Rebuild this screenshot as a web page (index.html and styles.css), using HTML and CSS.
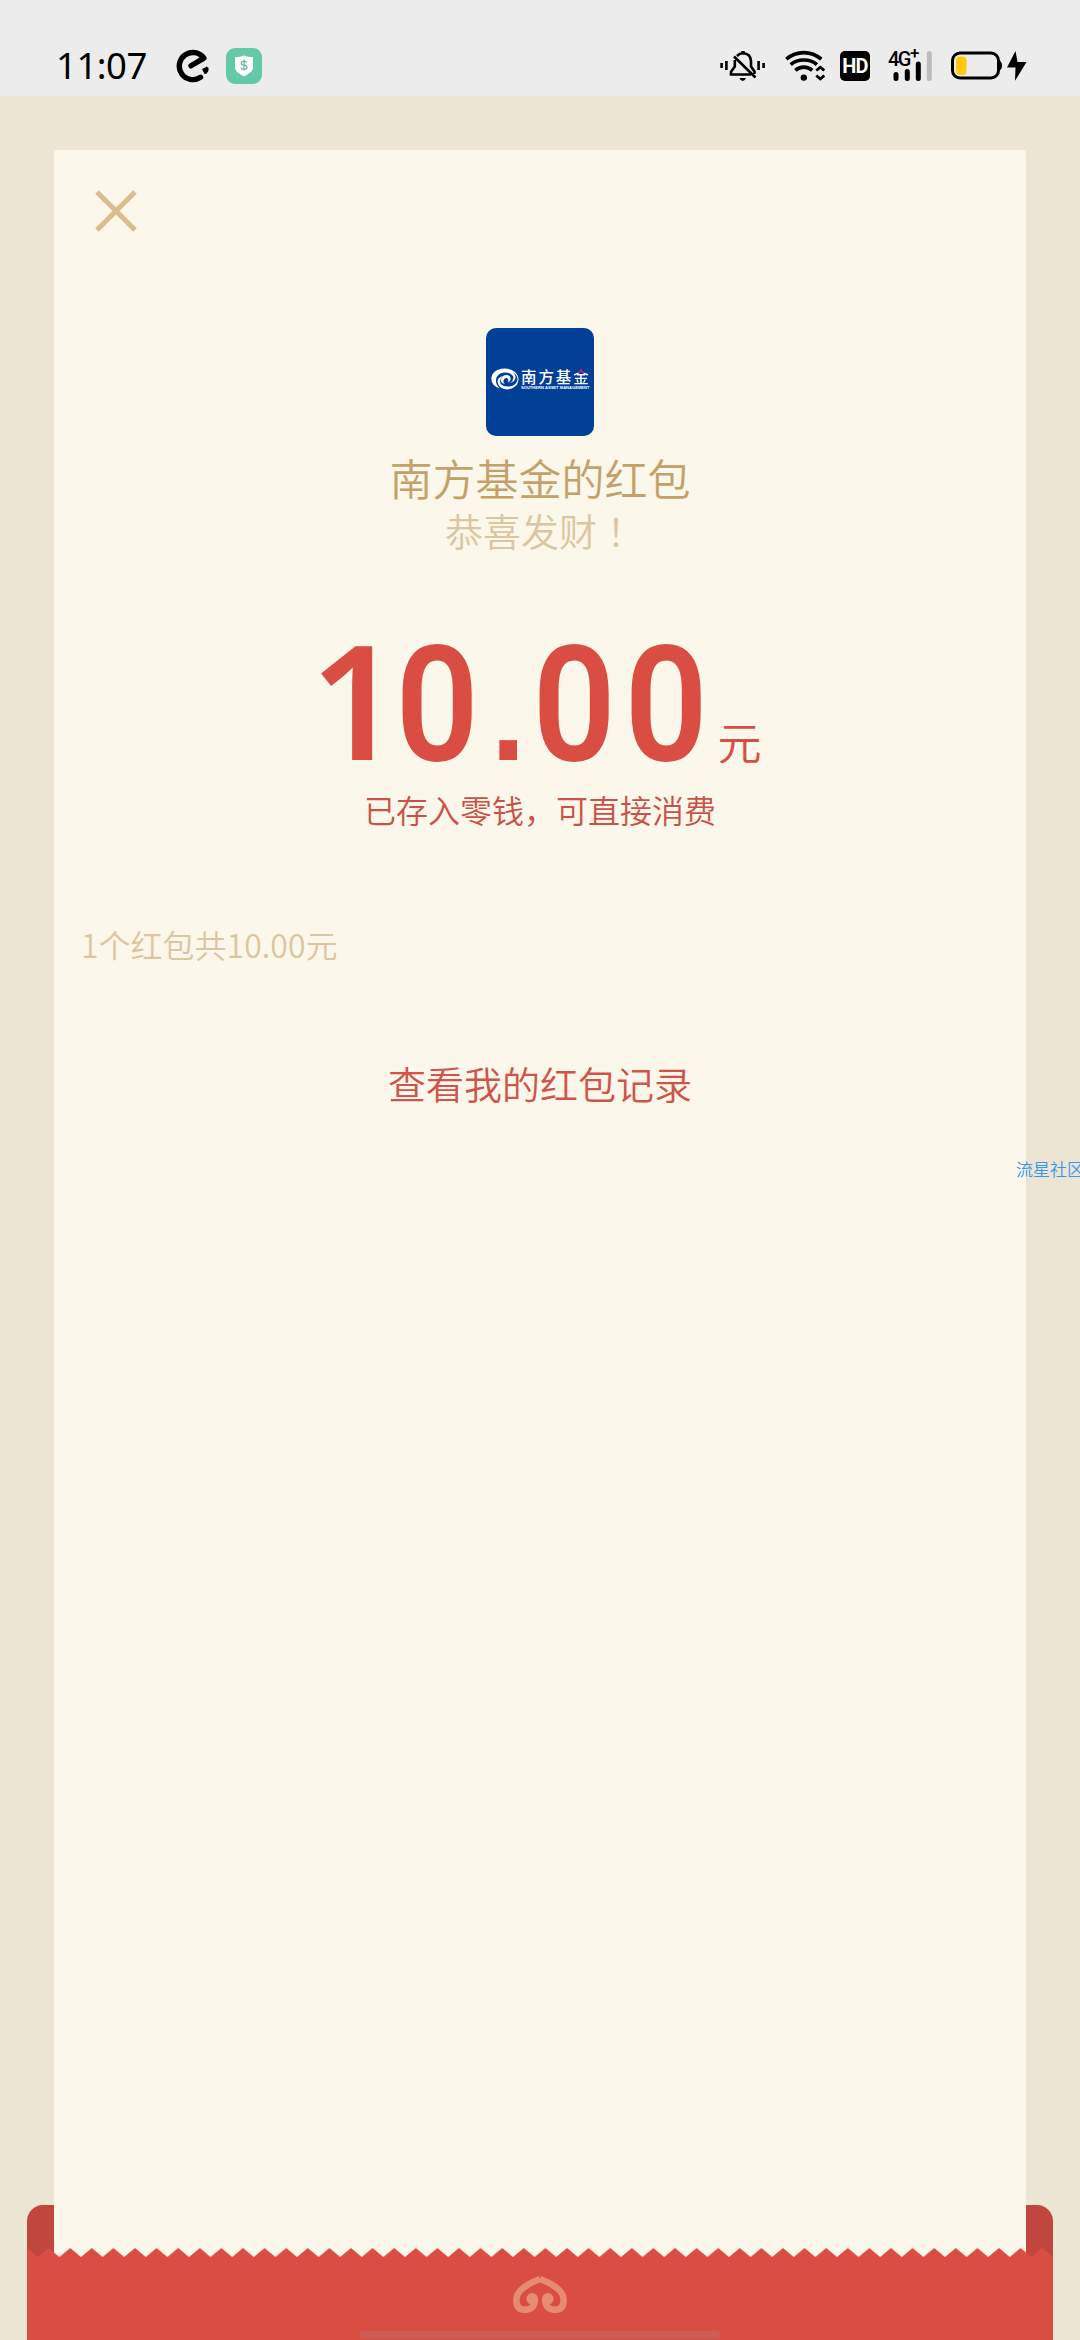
FILE: index.html
```html
<!DOCTYPE html>
<html lang="zh-CN">
<head>
<meta charset="utf-8">
<title>红包详情</title>
<link rel="stylesheet" href="styles.css">
</head>
<body>
<div class="screen">
  <header class="status">
    <div class="status-left">
      <time class="clock">11:07</time>
      <svg class="ico-e" width="34" height="34" viewBox="0 0 34 34">
        <path d="M24.500 28.300A13.600 13.600 0 1 1 27.900 9.100L15 16.800" fill="none" stroke="#000" stroke-width="5.400" stroke-linecap="round" stroke-linejoin="round"/>
        <path d="M26 20l2.500-1 2 -1.500 2 1.300v3l-2 3-2 .2z"/>
      </svg>
      <svg class="ico-shield" width="36" height="36" viewBox="0 0 36 36">
        <rect width="36" height="36" rx="9" fill="#63c9a9"/>
        <path d="M18 7.500Q22 9 27 9.200V20Q27 24 18 28.500Q9 24 9 20V9.200Q14 9 18 7.500z" fill="#fff"/>
        <path d="M21 14.600Q20.500 13.100 18 13.100Q15.200 13.100 15.200 15.200Q15.200 17 18 17.200Q21 17.500 21 19.400Q21 21.300 18 21.300Q15.300 21.300 15 19.600M18 11.600V22.800" fill="none" stroke="#63b99c" stroke-width="1.200"/>
      </svg>
    </div>
    <div class="status-right">
      <svg class="ico-bell" width="46" height="32" viewBox="0 0 46 32">
        <g fill="none" stroke="#000" stroke-width="2.600">
          <path d="M1.600 13v5M6.400 11v9M38.600 11v9M43.600 13v5"/>
          <path d="M17 6Q19.500 3.300 23 3.300Q30.500 3.500 31 11V16.500L34.500 21.500V24M14.800 10V16.500L11 21.800V24.500H31M14 6.500L35.500 27.500"/>
        </g>
        <path d="M21.300 1h3.400v3h-3.400zM19.500 28h6.500q-1 3-3.250 3t-3.250-3z"/>
      </svg>
      <svg class="ico-wifi" width="40" height="32" viewBox="0 0 40 32">
        <g fill="none" stroke="#000" stroke-width="3.700">
          <path d="M1.300 9.200Q9 2.600 18.800 2.600T36.300 9.200M5.700 14.600Q11 10 18.800 10T31.900 14.600M10.300 20.300Q14 17.200 18.800 17.200Q23.500 17.200 27.200 20.300"/>
          <path d="M31.300 20.500L35.300 17.200L39.300 20.500M31.300 25.500L35.300 29L39.300 25.500" stroke-width="2.800"/>
        </g>
        <circle cx="18.800" cy="27.600" r="3.200"/>
      </svg>
      <span class="hd">HD</span>
      <span class="signal">
        <span class="net">4G<i>+</i></span>
        <svg width="44" height="32" viewBox="0 0 44 32">
          <path d="M8 24.500V28.500M19.300 21.500V28.500M30.300 14V28.500" stroke="#000" stroke-width="5" stroke-linecap="round"/>
          <path d="M41.300 3.500V28.500" stroke="#bdbdbd" stroke-width="5" stroke-linecap="round"/>
        </svg>
      </span>
      <svg class="ico-battery" width="76" height="32" viewBox="0 0 76 32">
        <rect x="1.500" y="3" width="46" height="25" rx="7.500" fill="none" stroke="#000" stroke-width="3"/>
        <path d="M48 10q3 2 3 5.500t-3 5.500z"/>
        <rect x="5" y="6.500" width="10.500" height="18.500" rx="4" fill="#ffc815"/>
        <path d="M64.500 1L56 17.500H64.500L64 30.800L75.500 12H66.500z"/>
      </svg>
    </div>
  </header>

  <main class="stage">
    <section class="card">
      <svg class="close" width="42" height="42" viewBox="0 0 42 42"><path d="M2 2L40 40M40 2L2 40" stroke="#d9bd8d" stroke-width="5"/></svg>
      <div class="logo">
        <svg width="28" height="22" viewBox="0 0 28 22">
          <path d="M24 4Q18 -0.500 10 .8Q.5 3 .3 10.500Q.5 18 9 20.500Q4.500 16.500 5 11.500Q6 5.500 13 4.500Q19.500 4 22 8Q23.500 12 19 15Q25 13 24.500 8.500Q24 5.500 20 3.500Q26.500 6 26.500 11.500Q25.500 17.500 18.500 18.500Q11.500 19 9.500 15.500Q8 11 11.500 8Q6.500 9.500 6.500 13.500Q7.500 21 16 21.500Q26.500 20.500 27.500 12Q27.500 7 24 4z" fill="#fff"/>
          <path d="M12 8Q16 6 19 8.500Q21 12 17 14.500Q18 11 16 10Q13 9.500 12.500 12.500Q12 15 14 16Q10 15.500 9.800 12.300Q10 9.500 12 8z" fill="#fff"/>
        </svg>
        <div class="brand">
          <b>南方基<span class="gold">金</span></b>
          <small>SOUTHERN ASSET MANAGEMENT</small>
        </div>
      </div>
      <h1 class="sender">南方基金的红包</h1>
      <p class="wish">恭喜发财<span class="bang" lang="ja">！</span></p>
      <p class="amount"><span class="one">1</span><span class="zero">0</span><span class="dot">.</span><span class="zero">0</span><span class="zero">0</span><span class="unit">元</span></p>
      <p class="note">已存入零钱，可直接消费</p>
      <p class="count">1个红包共10.00元</p>
      <a class="records">查看我的红包记录</a>
    </section>
    <footer class="envelope">
      <svg class="teeth" width="1026" height="10" viewBox="0 0 1026 10">
        <defs><pattern id="tooth" width="21.600" height="10" patternUnits="userSpaceOnUse"><path d="M0 0L10.800 9L21.600 0V10H0z" fill="#da4d43"/></pattern></defs>
        <rect width="1026" height="10" fill="url(#tooth)"/>
      </svg>
      <div class="pocket">
        <svg class="knot" width="54" height="39" viewBox="0 0 54 39">
          <path d="M27 4Q3.300 13 3.300 25Q3.300 34.800 12 34.800Q21.500 34.500 22 24.500M27 4Q50.700 13 50.700 25Q50.700 34.800 42 34.800Q32.500 34.500 32 24.500" fill="none" stroke="#e68c70" stroke-width="6.400"/>
          <circle cx="19.200" cy="23.800" r="5.800" fill="#e68c70"/><circle cx="34.800" cy="23.800" r="5.800" fill="#e68c70"/>
        </svg>
        <div class="homebar"></div>
      </div>
    </footer>
  </main>
  <div class="watermark">流星社区</div>
</div>
</body>
</html>
```
FILE: styles.css
```css
* { box-sizing: border-box; margin: 0; padding: 0; }
body {
  width: 1080px;
  height: 2340px;
  overflow: hidden;
  font-family: "Noto Sans CJK SC", sans-serif;
  font-weight: 350;
}
svg { display: block; flex: none; }
.screen {
  position: relative;
  display: flex;
  flex-direction: column;
  height: 2340px;
  overflow: hidden;
  background: #ede5d3;
}
.status {
  display: flex;
  justify-content: space-between;
  height: 96px;
  padding: 48px 53px 0 56px;
  background: #ececec;
}
.status-left, .status-right { display: flex; align-items: flex-start; height: 36px; }
.clock {
  width: 120px;
  font: 400 36.500px/35px "Noto Sans", sans-serif;
  letter-spacing: -.5px;
  white-space: nowrap;
}
.ico-e { margin-top: 1px; }
.ico-shield { margin-left: 16px; }
.status-right { padding-top: 2px; }
.ico-wifi { margin-left: 19px; }
.hd {
  width: 30px;
  height: 30px;
  margin: 1px 0 0 15px;
  border-radius: 5px;
  background: #000;
  color: #fff;
  font: 700 20px/31px "Roboto", sans-serif;
  letter-spacing: -.8px;
  text-align: center;
}
.signal { display: grid; width: 44px; margin-left: 18px; }
.signal > * { grid-area: 1 / 1; }
.net { display: flex; height: 18px; font: 500 20px/18px "Roboto", sans-serif; letter-spacing: -1.5px; }
.net i { margin-top: -4px; font-style: normal; font-size: 17px; line-height: 14px; }
.ico-battery { margin-left: 19px; }

.stage {
  display: flex;
  flex-direction: column;
  flex: 1;
  padding-top: 54px;
}
.card {
  z-index: 1;
  display: flex;
  flex-direction: column;
  align-items: center;
  height: 2107px;
  margin: 0 54px;
  padding: 40px 27px 0;
  border-radius: 3px 3px 0 0;
  background: #fcf7eb;
}
.close { align-self: flex-start; margin-left: 14px; }
.logo {
  display: flex;
  align-items: center;
  gap: 2px;
  width: 108px;
  height: 108px;
  margin-top: 96px;
  padding: 0 4px 7px 5px;
  border-radius: 10px;
  background: #023f96;
  color: #fff;
}
.brand { display: flex; flex-direction: column; gap: 1px; width: 70px; }
.brand b { font-size: 15.500px; font-weight: 500; line-height: 16px; letter-spacing: 1.900px; white-space: nowrap; }
.gold { background: linear-gradient(#e0285a 35%, #fff 35%); -webkit-background-clip: text; background-clip: text; color: transparent; }
.brand small { font: 700 4.100px/5px "Liberation Sans", sans-serif; white-space: nowrap; }
.sender { margin-top: 10px; font-size: 43px; font-weight: 350; line-height: 62px; color: #c3a26a; }
.wish { font-size: 38px; line-height: 44px; color: #dcc6a0; }
.bang { font-family: "Noto Sans CJK JP", sans-serif; }
.amount {
  display: flex;
  align-items: baseline;
  height: 160px;
  margin-top: 70px;
  padding: 16px 20px 0 0;
  color: #da4d43;
  line-height: 116px;
}
.amount span { display: block; text-align: center; }
.amount .one { width: 92px; margin: 0 -11px 0 11px; font: 600 159px/116px "Noto Sans", sans-serif; }
.zero { width: 92px; font: 600 162px/116px "Roboto", sans-serif; transform: scaleX(.9); }
.dot { width: 45px; font: 400 185px/116px "Liberation Sans", sans-serif; }
.amount .unit { width: 50px; font-size: 44px; line-height: 50px; text-align: right; }
.note { margin-top: 4px; font-size: 32px; line-height: 46px; color: #cb5148; }
.count { align-self: flex-start; margin-top: 89px; font-size: 32px; line-height: 46px; color: #dcc6a0; }
.records { margin-top: 89px; font-size: 38px; line-height: 54px; color: #d0544a; }

.envelope {
  height: 135px;
  margin: -52px 27px 0;
  padding-top: 43px;
  border-radius: 16px 16px 0 0;
  background: #c1473e;
}
.teeth { position: relative; z-index: 2; }
.pocket {
  display: flex;
  flex-direction: column;
  align-items: center;
  height: 82px;
  padding-top: 17px;
  background: #da4d43;
}
.homebar { width: 360px; height: 8px; margin-top: 17px; border-radius: 4px; background: #cb5d54; }
.watermark {
  position: absolute;
  z-index: 2;
  top: 1157px;
  left: 1016px;
  font-size: 17px;
  line-height: 23px;
  white-space: nowrap;
  color: #3b95ea;
}
```
